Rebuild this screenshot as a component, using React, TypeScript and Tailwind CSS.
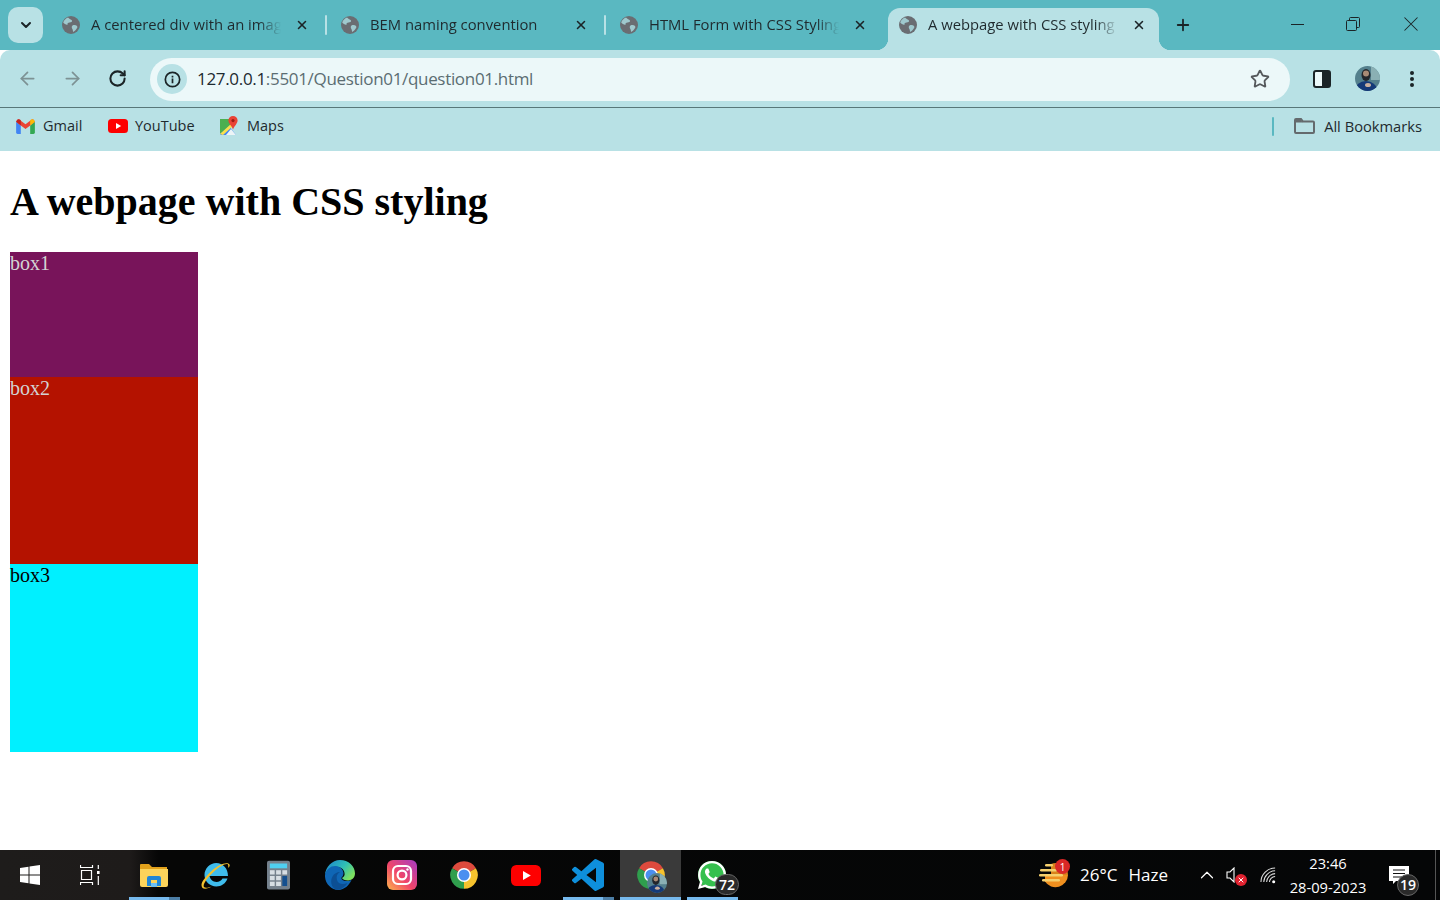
import React from "react";
import { ArrowLeft, ArrowRight, RotateCw, X, Plus, ChevronDown, Star, ChevronUp } from "lucide-react";
import { FaWhatsapp } from "react-icons/fa";

const ui = "font-['Open_Sans','Noto_Sans',sans-serif]";

function Globe() {
  return (
    <svg viewBox="0 0 18 18" className="w-[18px] h-[18px] shrink-0">
      <circle cx="9" cy="9" r="9" fill="#6a6d72" />
      <path d="M6 1.5C7.5 3 9 3.5 10 4.5 10.5 5.5 9 6.5 7.5 6.5 6 6.5 5 7.5 5.5 9 3.5 8.5 2 7.5 1.2 6.5 2 4 3.8 2.4 6 1.5Z" fill="#9fc9ce" />
      <path d="M10.5 9.5C12 8.8 14 9 15 10c.6.8.4 1.8-.3 2.6-.8 1.4-2 2.6-3.5 3.4-.4-1.2-.2-2-.8-3-.7-1-1-2.6.1-3.5Z" fill="#9fc9ce" />
    </svg>
  );
}

function Tab({ title, active, sep }: { title: string; active?: boolean; sep?: boolean }) {
  return (
    <div className={`relative flex items-center h-[42px] w-[271px] shrink-0 pl-[11px] pr-[12px] pb-[8px] rounded-t-[12px] ${active ? "bg-[#b8e1e5]" : ""}`}>
      {active && (
        <>
          <span className="absolute bottom-0 left-[-12px] w-[12px] h-[12px] bg-[radial-gradient(circle_at_0_0,#5ab8c1_12px,#b8e1e5_12.5px)]" />
          <span className="absolute bottom-0 right-[-12px] w-[12px] h-[12px] bg-[radial-gradient(circle_at_100%_0,#5ab8c1_12px,#b8e1e5_12.5px)]" />
        </>
      )}
      <Globe />
      <span className={`ml-[11px] mb-[2px] w-[190px] overflow-hidden whitespace-nowrap text-[14.8px] leading-[20px] text-[#1f2a2e] [mask-image:linear-gradient(to_right,black_88%,transparent)] ${ui}`}>{title}</span>
      <span className="ml-auto flex w-[16px] justify-center"><X size={14} strokeWidth={2.6} className="text-[#1b2427]" /></span>
      {sep && <span className="absolute right-[-5px] top-[7px] h-[20px] w-[2px] rounded bg-[#b8e1e5]" />}
    </div>
  );
}

function Gmail() {
  return (
    <svg viewBox="0 0 20 16" className="w-[19px] h-[15px]">
      <path d="M0 3v11.5A1.5 1.5 0 0 0 1.5 16H5V7Z" fill="#4285f4" />
      <path d="M20 3v11.5a1.5 1.5 0 0 1-1.5 1.5H15V7Z" fill="#34a853" />
      <path d="M0 3 1 1c1-1 2-1 3 0l6 4.5L16 1c1-1 2-1 3 0l1 2-5 4-5 3.7L5 7Z" fill="#ea4335" />
      <path d="M15 7V1.2c1-1 3-1.2 4-.2l1 2Z" fill="#fbbc04" />
      <path d="M5 7V1.2C4 .2 2 0 1 1L0 3Z" fill="#c5221f" />
    </svg>
  );
}

function YouTube({ w = 20, h = 14 }: { w?: number; h?: number }) {
  return (
    <svg viewBox="0 0 20 14" style={{ width: w, height: h }}>
      <rect width="20" height="14" rx="3.5" fill="#fe0000" />
      <path d="M8 4l5.2 3L8 10Z" fill="#fff" />
    </svg>
  );
}

function Maps() {
  return (
    <svg viewBox="0 0 18 20" className="w-[18px] h-[20px]">
      <path d="M0 3h11l1 5-3 3-9 7Z" fill="#4caf50" />
      <path d="M0 18 9 10l7 9H1Z" fill="#4285f4" />
      <path d="M0 18l12-11 1 3L3 19Z" fill="#fbe04a" />
      <path d="M6 19l5-6 5 6Z" fill="#ecf4f6" />
      <path d="M13 0a4.6 4.6 0 0 1 4.6 4.6c0 3-3 5-4.6 9-1.3-4-4.6-6-4.6-9A4.6 4.6 0 0 1 13 0Z" fill="#e94335" />
      <circle cx="13" cy="4.6" r="1.6" fill="#9c1c14" />
    </svg>
  );
}

function Bookmark({ icon, label, w }: { icon: React.ReactNode; label: string; w: string }) {
  return (
    <div className={`flex items-center ${w}`}>
      <span className="flex w-[27px] items-center">{icon}</span>
      <span className={`text-[14.5px] leading-[20px] text-[#1f2a2e] ${ui}`}>{label}</span>
    </div>
  );
}

function Avatar({ size }: { size: number }) {
  return (
    <svg viewBox="0 0 25 25" style={{ width: size, height: size }}>
      <clipPath id={`av${size}`}><circle cx="12.5" cy="12.5" r="12.5" /></clipPath>
      <g clipPath={`url(#av${size})`}>
        <rect width="25" height="25" fill="#54808d" />
        <rect x="16" width="9" height="14" fill="#8ab0b4" />
        <ellipse cx="11" cy="24" rx="11" ry="9" fill="#153a78" />
        <ellipse cx="11" cy="9" rx="4.5" ry="6" fill="#23262c" />
        <ellipse cx="11" cy="7.5" rx="3" ry="3" fill="#a98a75" />
        <ellipse cx="13" cy="19" rx="3" ry="2" fill="#c9b0a0" />
      </g>
    </svg>
  );
}

function Chrome() {
  return (
    <svg viewBox="0 0 24 24" className="w-[30px] h-[30px]">
      <path d="M12 12 2.47 6.5A11 11 0 0 1 21.53 6.5Z" fill="#dd4a3d" />
      <path d="M12 12 21.53 6.5A11 11 0 0 1 12 23Z" fill="#f6c22d" />
      <path d="M12 12 12 23A11 11 0 0 1 2.47 6.5Z" fill="#2f9e4d" />
      <circle cx="12" cy="12" r="5.6" fill="#fff" />
      <circle cx="12" cy="12" r="4.4" fill="#4b8ff0" />
    </svg>
  );
}

function TaskItem({ children, mark, active, split }: { children: React.ReactNode; mark?: boolean; active?: boolean; split?: boolean }) {
  return (
    <div className={`relative flex h-full items-center justify-center ${active ? "ml-[1px] w-[61px] bg-[#3a3a3a]" : "w-[62px]"}`}>
      {children}
      {mark && (
        <span className={`absolute bottom-0 flex h-[3px] ${active ? "left-0 w-full" : "left-[6px] w-[51px]"}`}>
          <span className={`h-full bg-[#76b9ed] ${split ? "w-[40px]" : "w-full"}`} />
          {split && <span className="h-full flex-1 bg-[#4c7ea6]" />}
        </span>
      )}
    </div>
  );
}

export default function App() {
  return (
    <div className="flex h-screen w-full flex-col overflow-hidden bg-white">
      {/* tab strip */}
      <div className="flex h-[50px] shrink-0 items-end bg-[#5ab8c1]">
        <div className="mb-[7px] ml-[8px] flex h-[36px] w-[35px] shrink-0 items-center justify-center rounded-[10px] bg-[#b8e1e5]">
          <ChevronDown size={16} strokeWidth={3} className="text-[#1b2427]" />
        </div>
        <div className="ml-[8px] flex h-[42px] gap-[8px]">
          <Tab title="A centered div with an image" sep />
          <Tab title="BEM naming convention" sep />
          <Tab title="HTML Form with CSS Styling" />
          <Tab title="A webpage with CSS styling" active />
        </div>
        <div className="flex h-[42px] w-[48px] shrink-0 items-center justify-center pb-[8px]">
          <Plus size={18} strokeWidth={2.4} className="text-[#1b2427]" />
        </div>
        <div className="ml-auto flex h-full items-center pb-[2px]">
          <div className="flex w-[58px] justify-center">
            <svg viewBox="0 0 13 1" className="h-[1px] w-[13px]"><rect width="13" height="1" fill="#1b2427" /></svg>
          </div>
          <div className="flex w-[57px] justify-center pr-[3px]">
            <svg viewBox="0 0 14 14" className="h-[14px] w-[14px]" fill="none" stroke="#1b2427" strokeWidth="1">
              <rect x="0.5" y="3.5" width="10" height="10" rx="1" />
              <path d="M3.5 3.5V1.5a1 1 0 0 1 1-1h8a1 1 0 0 1 1 1v8a1 1 0 0 1-1 1h-2" />
            </svg>
          </div>
          <div className="flex w-[57px] justify-center pr-[2px]">
            <svg viewBox="0 0 14 14" className="h-[14px] w-[14px]" fill="none" stroke="#1b2427" strokeWidth="1.05">
              <path d="M.5.5l13 13M13.5.5l-13 13" />
            </svg>
          </div>
        </div>
      </div>

      {/* toolbar */}
      <div className="flex h-[58px] shrink-0 items-center rounded-t-[10px] border-b border-[#587779] bg-[#b8e1e5]">
        <div className="flex w-[150px] shrink-0 items-center pl-[17px] text-[#1b2427]">
          <ArrowLeft size={21} strokeWidth={2} className="text-[#7d9294]" />
          <ArrowRight size={21} strokeWidth={2} className="ml-[24px] text-[#7d9294]" />
          <RotateCw size={19} strokeWidth={2.6} className="ml-[25px]" />
        </div>
        <div className="mt-[1px] flex h-[43px] flex-1 items-center rounded-full bg-[#ecf8f9] pl-[7px] pr-[20px]">
          <div className="flex h-[30px] w-[30px] items-center justify-center rounded-full bg-[#b8e1e5]">
            <svg viewBox="0 0 18 18" className="h-[17px] w-[17px]" fill="none" stroke="#1b2427" strokeWidth="1.8">
              <circle cx="9" cy="9" r="7.6" />
              <path d="M9 8v5M9 5v1.8" />
            </svg>
          </div>
          <span className={`ml-[10px] text-[17px] leading-[24px] tracking-[-0.32px] text-[#5b6d72] ${ui}`}>
            <span className="text-[#1c2a30]">127.0.0.1</span>:5501/Question01/question01.html
          </span>
          <Star size={20} strokeWidth={2.2} className="ml-auto text-[#55595c]" />
        </div>
        <div className="flex w-[150px] shrink-0 items-center">
          <svg viewBox="0 0 18 18" className="ml-[23px] h-[18px] w-[18px]">
            <rect x="1" y="1" width="16" height="16" rx="2" fill="#ecf8f9" stroke="#1b2427" strokeWidth="2" />
            <rect x="9" y="1" width="8" height="16" rx="1" fill="#1b2427" />
          </svg>
          <span className="ml-[24px] flex"><Avatar size={25} /></span>
          <svg viewBox="0 0 4 16" className="ml-[30px] h-[16px] w-[4px]" fill="#1b2427">
            <circle cx="2" cy="2" r="2" /><circle cx="2" cy="8" r="2" /><circle cx="2" cy="14" r="2" />
          </svg>
        </div>
      </div>

      {/* bookmarks */}
      <div className="flex h-[43px] shrink-0 items-center bg-[#b8e1e5] pb-[7px] pl-[16px] pr-[18px]">
        <Bookmark icon={<Gmail />} label="Gmail" w="w-[92px]" />
        <Bookmark icon={<YouTube />} label="YouTube" w="w-[112px]" />
        <Bookmark icon={<Maps />} label="Maps" w="w-auto" />
        <span className="ml-auto mr-[20px] h-[19px] w-[2px] rounded bg-[#5ab8c1]" />
        <svg viewBox="0 0 21 16" className="mr-[9px] h-[16px] w-[21px]">
          <path d="M1 4V2a1 1 0 0 1 1-1h5l2 2.5h10a1 1 0 0 1 1 1V14a1 1 0 0 1-1 1H2a1 1 0 0 1-1-1Z" fill="none" stroke="#646a6d" strokeWidth="2" />
          <path d="M1 2h6l1.800 2.500H1Z" fill="#646a6d" />
        </svg>
        <span className={`mb-[1px] text-[14.7px] leading-[20px] text-[#1f2a2e] ${ui}`}>All Bookmarks</span>
      </div>

      {/* page */}
      <main className="flex-1 px-[10px] font-['Liberation_Serif','Times_New_Roman',serif]">
        <h1 className="mb-[27px] mt-[28px] text-[40px] font-bold leading-[46px] text-black">A webpage with CSS styling</h1>
        <div className="h-[125px] w-[188px] bg-[#78145a] text-[20px] leading-[23px] text-[#d3d3d3]">box1</div>
        <div className="h-[187px] w-[188px] bg-[#b41200] text-[20px] leading-[23px] text-[#d3d3d3]">box2</div>
        <div className="h-[188px] w-[188px] bg-[#00f0ff] text-[20px] leading-[23px] text-black">box3</div>
      </main>

      {/* taskbar */}
      <footer className="flex h-[50px] shrink-0 items-center bg-[linear-gradient(90deg,#1e1c1b_0%,#1e1b1a_9%,#060606_11%,#050607_100%)] text-white">
        <div className="flex h-full w-[60px] items-center justify-center">
          <svg viewBox="0 0 20 20" className="h-[20px] w-[20px]" fill="#fff">
            <path d="M0 3l8.5-1.2v7.7H0ZM9.5 1.6 20 0v9.5H9.5ZM0 10.5h8.5v7.7L0 17ZM9.5 10.5H20V20L9.5 18.4Z" />
          </svg>
        </div>
        <div className="flex h-full w-[63px] items-center justify-center pr-[3px]">
          <svg viewBox="0 0 20 20" className="h-[20px] w-[20px]" fill="none" stroke="#fff" strokeWidth="1.2">
            <path d="M.5 0v2.5h12V0M.5 20v-2.5h12V20M1.500 5.500h10v9h-10Z" />
            <rect x="17" y="6" width="2.6" height="3" fill="#fff" stroke="none" />
            <path d="M18.300 0v4M18.300 11v9" />
          </svg>
        </div>
        <TaskItem mark split>
          <svg viewBox="0 0 28 24" className="h-[24px] w-[28px]">
            <path d="M0 2a1 1 0 0 1 1-1h8l3 3h15v3H0Z" fill="#e2a11b" />
            <path d="M0 6h28v16a2 2 0 0 1-2 2H2a2 2 0 0 1-2-2Z" fill="#fbd35b" />
            <path d="M7 23v-8a2 2 0 0 1 2-2h10a2 2 0 0 1 2 2v8h-4v-6h-6v6Z" fill="#1f86d6" />
            <rect x="11" y="20" width="6" height="4" fill="#6cc0f5" />
          </svg>
        </TaskItem>
        <TaskItem>
          <svg viewBox="0 0 30 30" className="h-[30px] w-[30px]" fill="none">
            <path d="M22 12.5H8.5c.3-3 3-5.5 6.500-5.500 3.500 0 7 2.500 7 5.500ZM8.500 16c.5 3 3.500 6 7 6 2.600 0 4.800-1.300 6-3.500h5c-1.700 4.800-6 8-11.200 8C9 26.500 3.500 21.500 3.500 15S9 3 15.300 3C22 3 27 8.500 27 16Z" fill="#3fbcec" />
            <path d="M28.500 4.500c-2-3-11-.5-18.500 7S-1.500 24 1.500 28c2 1.500 6 .5 9-1.500-2.500 1-6 2-7.500 .5-1.500-2 2-8 9-14.500s13-9.500 15-8c.5 1 .3 2.300 0 3.500 1.500-1 2-2.500 1.500-3.500Z" fill="#f2c230" />
          </svg>
        </TaskItem>
        <TaskItem>
          <svg viewBox="0 0 24 30" className="h-[30px] w-[23px]">
            <rect width="24" height="30" rx="2" fill="#74808c" />
            <rect x="3" y="3" width="18" height="5" fill="#4fd0f2" />
            <g fill="#d7dee4">
              <rect x="3" y="10" width="5" height="4.500" /><rect x="9.500" y="10" width="5" height="4.500" /><rect x="16" y="10" width="5" height="4.500" />
              <rect x="3" y="16" width="5" height="4.500" /><rect x="9.500" y="16" width="5" height="4.500" />
              <rect x="3" y="22" width="5" height="4.500" /><rect x="9.500" y="22" width="5" height="4.500" />
            </g>
            <rect x="16" y="16" width="5" height="10.500" fill="#144f8f" />
          </svg>
        </TaskItem>
        <TaskItem>
          <svg viewBox="0 0 30 30" className="h-[30px] w-[30px]">
            <defs>
              <linearGradient id="edgeA" x1="0" y1="0" x2="1" y2="0.6"><stop offset="0" stopColor="#1b7fd0" /><stop offset="0.6" stopColor="#2fbfb5" /><stop offset="1" stopColor="#7ee05f" /></linearGradient>
            </defs>
            <path d="M15 0c8.500 0 15 6 15 13.500 0 4.500-3.500 7-7.500 7-2.500 0-5-1-5.500-2.500 2-1 3-3 2.500-5C19 9 15.500 7 12 7 6 7 1.500 11 0 15 .5 7 7 0 15 0Z" fill="url(#edgeA)" />
            <path d="M0 15c1-6 6-9.500 11-9 4 .5 7 3 7.500 7 0 1.500-.5 3-1.500 4-2 2 1.500 4.500 5.500 4 1.500 0 3-.5 4-1-2.500 5.500-7 9.500-13 10C6 30-.5 23 0 15Z" fill="#0f66b5" />
            <path d="M11 29.800C6 27 5 21 7.500 16.500 9 13.500 12 12 15 12c-3 1.500-4 4.500-3 8 1 3.500 5 5.500 10.500 3-2.500 4-6.500 7-11.500 6.800Z" fill="#0c4f94" />
          </svg>
        </TaskItem>
        <TaskItem>
          <svg viewBox="0 0 30 30" className="h-[30px] w-[30px]" fill="none">
            <defs>
              <linearGradient id="ig" x1="0" y1="1" x2="1" y2="0"><stop offset="0" stopColor="#fdb44b" /><stop offset="0.45" stopColor="#f0456a" /><stop offset="1" stopColor="#a63bc4" /></linearGradient>
            </defs>
            <rect width="30" height="30" rx="6" fill="url(#ig)" />
            <rect x="6" y="6" width="18" height="18" rx="5" stroke="#fff" strokeWidth="2.200" />
            <circle cx="15" cy="15" r="4.400" stroke="#fff" strokeWidth="2.200" />
            <circle cx="20.500" cy="9.500" r="1.200" fill="#fff" />
          </svg>
        </TaskItem>
        <TaskItem><Chrome /></TaskItem>
        <TaskItem><YouTube w={30} h={21} /></TaskItem>
        <TaskItem mark split>
          <svg viewBox="0 0 24 24" className="h-[32px] w-[32px]" fill="#0e8fdc">
            <path d="M23.150 2.587 18.210.21a1.494 1.494 0 0 0-1.705.29l-9.460 8.630-4.120-3.128a.999.999 0 0 0-1.276.057L.327 7.261A1 1 0 0 0 .326 8.740L3.899 12 .326 15.260a1 1 0 0 0 .001 1.479L1.650 17.940a.999.999 0 0 0 1.276.057l4.120-3.128 9.460 8.630a1.492 1.492 0 0 0 1.704.290l4.942-2.377A1.500 1.500 0 0 0 24 20.060V3.939a1.500 1.500 0 0 0-.850-1.352zm-5.146 14.861L10.826 12l7.178-5.448v10.896z" />
          </svg>
        </TaskItem>
        <TaskItem mark active>
          <Chrome />
          <span className="absolute left-[27px] top-[23px] flex"><Avatar size={20} /></span>
        </TaskItem>
        <TaskItem mark>
          <span className="relative flex h-[32px] w-[32px] items-center justify-center">
            <span className="absolute h-[28px] w-[28px] rounded-full bg-[#35c04e]" />
            <FaWhatsapp size={32} className="relative text-white" />
            <span className={`absolute left-[19px] top-[15px] flex h-[21px] w-[24px] items-center justify-center rounded-full border border-[#666] bg-[#2a2a2a] text-[14px] font-semibold leading-none ${ui}`}>72</span>
          </span>
        </TaskItem>

        {/* tray */}
        <div className="ml-auto flex h-full items-center">
          <span className="relative mr-[11px] flex">
            <svg viewBox="0 0 30 28" className="h-[28px] w-[30px]">
              <path d="M6 14h23a12.500 12.500 0 0 1-23 6.500Z" fill="#ef8f1f" />
              <path d="M12 3a12 12 0 0 1 17 11H12Z" fill="#d9831c" />
              <rect x="1" y="8" width="17" height="2.600" rx="1.300" fill="#f5cf6d" />
              <rect x="0" y="13" width="24" height="2.600" rx="1.300" fill="#f5cf6d" />
              <rect x="3" y="18" width="18" height="2.600" rx="1.300" fill="#f5cf6d" />
              <rect x="6" y="3" width="8" height="2.600" rx="1.300" fill="#f5cf6d" />
            </svg>
            <span className={`absolute right-[-1px] top-[-2px] flex h-[15px] w-[15px] items-center justify-center rounded-full bg-[#d92727] text-[10px] leading-none ${ui}`}>1</span>
          </span>
          <span className={`mr-[11px] text-[17px] leading-[22px] ${ui}`}>26°C</span>
          <span className={`mr-[28px] text-[17px] leading-[22px] ${ui}`}>Haze</span>
          <ChevronUp size={22} strokeWidth={1.3} className="mr-[8px]" />
          <span className="relative mr-[20px] flex">
            <svg viewBox="0 0 14 16" className="h-[16px] w-[14px]" fill="none" stroke="#fff" strokeWidth="1.100">
              <path d="M1 5h3l4-4v14l-4-4H1Z" />
            </svg>
            <span className="absolute left-[9px] top-[7px] flex h-[12px] w-[12px] items-center justify-center rounded-full bg-[#e0212f]">
              <X size={8} strokeWidth={3} />
            </span>
          </span>
          <svg viewBox="0 0 18 18" className="mr-[5px] h-[17px] w-[17px]" fill="none" stroke="#ddd" strokeWidth="1.100">
            <path d="M1 16C1 8 8 1 16 1M4 16c0-6 5.500-12 12-12M7 16c0-4 4-9 9-9M10 16c0-2.500 2.500-6 6-6" />
            <circle cx="14.500" cy="15.500" r="1.600" fill="#fff" stroke="none" />
          </svg>
          <div className={`flex w-[92px] flex-col items-center text-[14.7px] leading-[24px] ${ui}`}>
            <span className="text-center">23:46</span>
            <span className="text-center">28-09-2023</span>
          </div>
          <span className="relative ml-[15px] mr-[26px] flex">
            <svg viewBox="0 0 20 18" className="h-[18px] w-[20px]">
              <path d="M0 0h20v15H7l-3 3v-3H0Z" fill="#fff" />
              <path d="M4 4h12M4 7.500h12M4 11h9" stroke="#111" strokeWidth="1.200" />
            </svg>
            <span className={`absolute left-[8px] top-[8px] flex h-[22px] w-[22px] items-center justify-center rounded-full border border-[#666] bg-[#2a2a2a] text-[14px] font-semibold leading-none ${ui}`}>19</span>
          </span>
          <span className="h-full w-[1px] bg-[#555]" />
          <span className="w-[4px]" />
        </div>
      </footer>
    </div>
  );
}
